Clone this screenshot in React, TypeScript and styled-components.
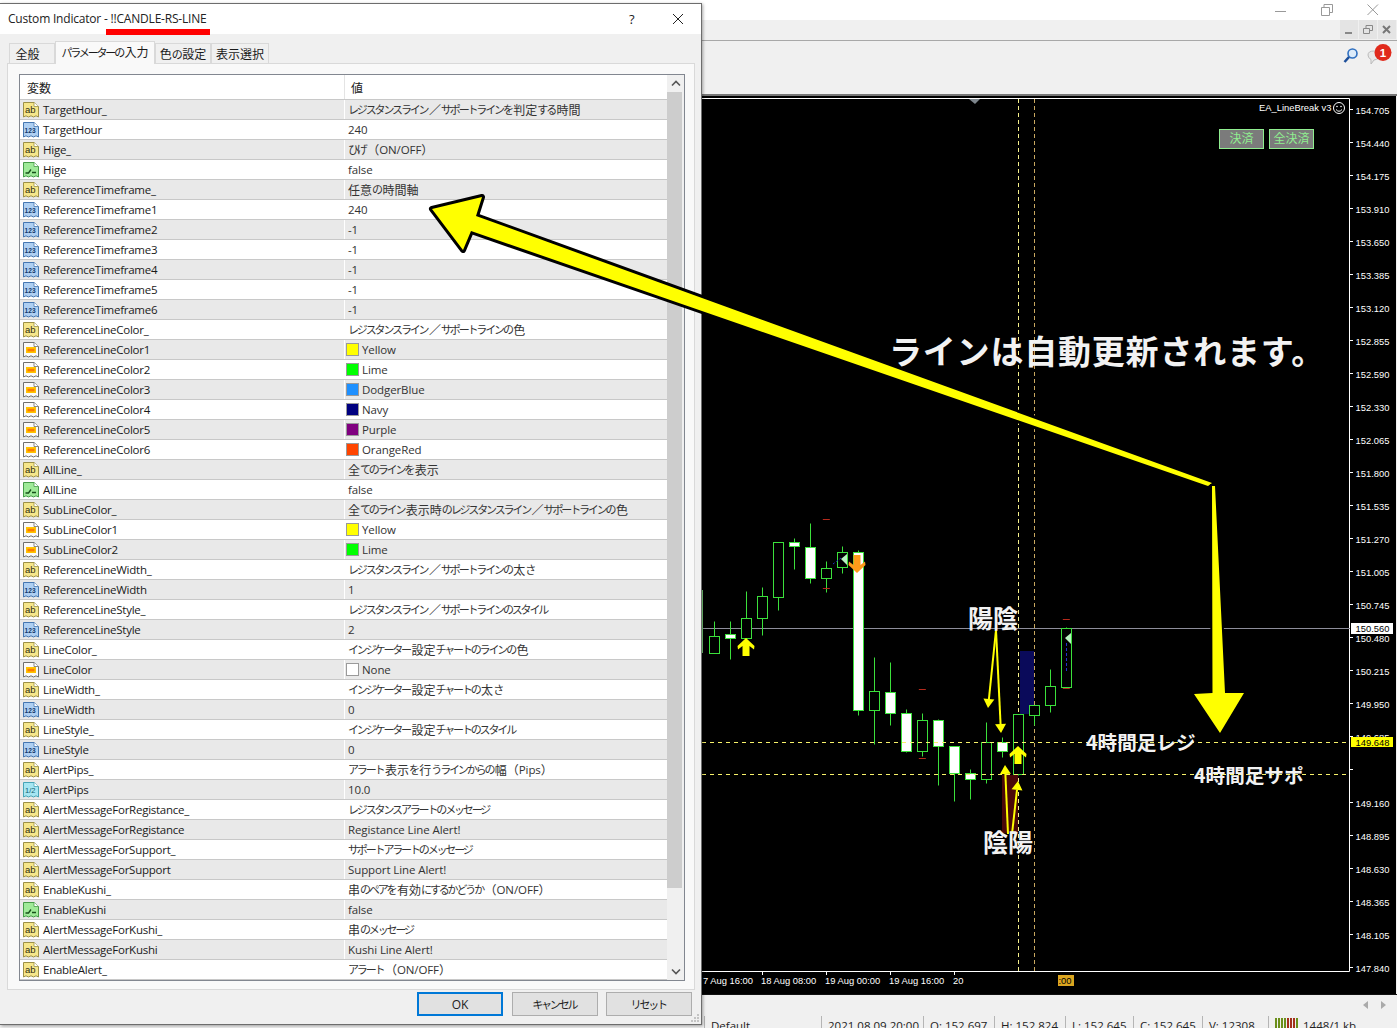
import React from "react";
import styled, { createGlobalStyle } from "styled-components";

const UI = `"Open Sans", "Noto Sans CJK JP", sans-serif`;
const CJK = `"Noto Sans CJK JP", sans-serif`;

const Global = createGlobalStyle`
  html, body { margin: 0; padding: 0; background: #f0f0f0; overflow: hidden; }
  body { font-family: ${UI}; font-size: 11.5px; color: #1a1a1a; }
  * { box-sizing: border-box; }
`;

const Page = styled.div`
  position: relative; width: 1397px; height: 1028px; overflow: hidden;
  display: flex; flex-direction: column; background: #f0f0f0;
`;
const AppTitle = styled.div`
  height: 20px; background: #fff; display: flex; justify-content: flex-end; align-items: center; gap: 34px; padding-right: 18px;
  flex: none;
`;
const MdiBar = styled.div`
  height: 21px; flex: none; background: #f0f0f0; border-bottom: 1px solid #a8a8a8;
  display: flex; justify-content: flex-end; gap: 1px; padding-right: 1px;
`;
const MdiButton = styled.div`
  width: 18px; height: 19px; background: #e4e4e4; display: flex; align-items: center; justify-content: center;
`;
const Toolbar = styled.div`
  height: 55px; flex: none; background: #f0f0f0; border-bottom: 2px solid #777;
  display: flex; justify-content: flex-end; align-items: flex-start; padding: 2px 4px 0 0; gap: 5px;
`;
const ChartArea = styled.div`
  height: 899px; flex: none; background: #f0f0f0; border-bottom: 1px solid #111;
  svg { display: block; }
`;
const ScrollRow = styled.div`
  height: 19px; flex: none; background: #f0f0f0; display: flex; justify-content: flex-end; align-items: center; gap: 12px; padding-right: 10px;
`;
const StatusBar = styled.div`
  height: 14px; flex: none; background: #f0f0f0; display: flex; padding-left: 704px; font-size: 11.5px; color: #222; line-height: 20px; padding-top: 2px;
`;
const StatusCell = styled.div<{ $w: number }>`
  width: ${p => p.$w}px; border-left: 1px solid #b5b5b5; padding-left: 6px; white-space: nowrap; display: flex; gap: 4px;
`;

const Dialog = styled.div`
  position: absolute; left: 0; top: 3px; width: 702px; height: 1022px; background: #f0f0f0;
  border: 1px solid #6d6d6d; border-left: none; box-shadow: 1px 1px 3px rgba(0,0,0,.35);
  display: flex; flex-direction: column;
`;
const DialogTitle = styled.div`
  position: relative; height: 30px; flex: none; background: #fff; display: flex; align-items: center; padding: 0 0 2px 8px; font-size: 12px; letter-spacing: -0.2px; white-space: nowrap; color: #222;
`;
const RedMark = styled.div`
  position: absolute; left: 106px; top: 25px; width: 104px; height: 6px; background: #ff0000;
`;
const HelpMark = styled.span`
  position: absolute; left: 629px; top: 6px; font-size: 13px;
`;
const CloseMark = styled.span`
  position: absolute; left: 672px; top: 9px; display: flex;
`;
const TabRow = styled.div`
  height: 30px; flex: none; padding: 8px 0 0 9px; display: flex; align-items: flex-end; position: relative; z-index: 1; margin-bottom: -1px;
`;
const Tab = styled.div<{ $active?: boolean; $w: number; $inset?: number }>`
  width: ${p => p.$w}px; height: ${p => (p.$active ? 23 : 21)}px;
  background: ${p => (p.$active ? "#f9f9f9" : "#f0f0f0")};
  border: 1px solid #d9d9d9; border-bottom: ${p => (p.$active ? "none" : "1px solid #d9d9d9")};
  display: flex; align-items: center; justify-content: center; font-size: 12px; white-space: nowrap;
  padding-bottom: ${p => (p.$active ? 3 : 0)}px; padding-right: ${p => p.$inset ?? 0}px;
`;
const Panel = styled.div`
  height: 927px; flex: none; margin: 0 6px 0 7px; background: #f9f9f9; border: 1px solid #d9d9d9; padding: 10px 9px 8px 11px;
`;
const Frame = styled.div`
  height: 907px; border: 1px solid #828790; background: #fff; display: flex; overflow: hidden;
`;
const Table = styled.div`
  flex: 1; min-width: 0; display: flex; flex-direction: column;
`;
const Head = styled.div`
  height: 25px; flex: none; display: grid; grid-template-columns: 324px 1fr; border-bottom: 1px solid #c8c8c8; align-items: stretch;
`;
const HeadCell = styled.div<{ $second?: boolean }>`
  padding-left: ${p => (p.$second ? 6 : 7)}px; display: flex; align-items: center; font-size: 12px;
  border-left: ${p => (p.$second ? "1px solid #e4e4e4" : "none")};
`;
const Row = styled.div<{ $alt: boolean }>`
  height: 20px; flex: none; display: grid; grid-template-columns: 324px 1fr; background: ${p => (p.$alt ? "#e9e9e9" : "#fff")};
  border-bottom: 1px solid #c8c8c8;
`;
const NameCell = styled.div`
  display: flex; align-items: center; gap: 4px; padding-left: 3px; white-space: nowrap; line-height: 19px; letter-spacing: -0.25px;
`;
const ValueCell = styled.div`
  display: flex; align-items: center; padding-left: 3px; border-left: 1px solid #fff; white-space: nowrap; line-height: 19px; color: #333; letter-spacing: -0.1px;
`;
const Swatch = styled.span<{ $color: string }>`
  width: 13px; height: 13px; margin: 0 3px 0 -2px; background: ${p => p.$color}; border: 1px solid #9a9a9a; flex: none;
`;
const Kana = styled.span`
  font-family: ${CJK}; font-size: 11px; letter-spacing: -2.15px; margin-right: 1.5px;
`;
const Kanji = styled.span`
  font-family: ${CJK}; font-size: 12px; letter-spacing: 0;
`;
const Scrollbar = styled.div`
  width: 17px; flex: none; background: #f0f0f0; display: flex; flex-direction: column; align-items: center;
`;
const ScrollEnd = styled.div`
  height: 17px; flex: none; display: flex; align-items: center; justify-content: center; width: 100%;
`;
const ScrollTrack = styled.div`
  flex: 1; width: 100%; padding-right: 2px;
`;
const Thumb = styled.div`
  height: 796px; background: #cdcdcd;
`;
const Footer = styled.div`
  flex: 1; display: flex; justify-content: flex-end; align-items: flex-start; padding: 2px 9px 0 0; gap: 8px; position: relative;
`;
const Btn = styled.div<{ $primary?: boolean }>`
  width: 86px; height: 24px; background: #e1e1e1; display: flex; align-items: center; justify-content: center; font-size: 12px;
  border: ${p => (p.$primary ? "2px solid #0078d7" : "1px solid #adadad")}; margin-right: ${p => (p.$primary ? 1 : 0)}px; color: #222;
`;
const Grip = styled.svg`
  position: absolute; right: 1px; bottom: 1px;
`;
const Overlay = styled.svg`
  position: absolute; left: 0; top: 0; pointer-events: none;
`;

const Jp = ({ text }: { text: string }) => (
  <>
    {text.split(/([\u3040-\u30ff]+|[\u3400-\u9fff\uff00-\uffef]+)/).map((part, i) =>
      /^[\u3040-\u30ff]/.test(part) ? <Kana key={i}>{part}</Kana> :
      /^[\u3400-\u9fff\uff00-\uffef]/.test(part) ? <Kanji key={i}>{part}</Kanji> : part
    )}
  </>
);

type Kind = "ab" | "int" | "bool" | "color" | "dbl";
const DOC = "M.5 .5H11L15.5 4.5V15L13 13.8 10.5 15 8 13.8 5.5 15 3 13.8 .5 15Z";
const TypeIcon = ({ kind }: { kind: Kind }) => {
  const c = {
    ab: ["#f6e68a", "#9c9048"], int: ["#aecff2", "#4677b0"], bool: ["#9fea98", "#479a48"],
    color: ["#fafafa", "#707070"], dbl: ["#a6e6f2", "#48a4b6"],
  }[kind];
  return (
    <svg width="16" height="16" viewBox="0 0 16 16" style={{ flex: "none" }}>
      <path d={DOC} fill={c[0]} stroke={c[1]} />
      <path d="M11 .5V4.5H15.5" fill="#fff" stroke={c[1]} strokeWidth=".8" />
      {kind === "ab" && <text x="2" y="11.4" fontSize="9.5" fontFamily="Liberation Sans" fill="#2f2c10" letterSpacing="0">ab</text>}
      {kind === "int" && <text x="1.6" y="11" fontSize="6.6" fontWeight="700" fontFamily="Liberation Sans" fill="#133a6c" letterSpacing="0">123</text>}
      {kind === "dbl" && <text x="2" y="11" fontSize="7.5" fontFamily="Liberation Sans" fill="#14606f" letterSpacing="0">1/2</text>}
      {kind === "bool" && <path d="M2.5 11H5.5L8 7.5M9 10.5H13" fill="none" stroke="#174f1a" strokeWidth="1.3" />}
      {kind === "color" && <>
        <rect x="3" y="5" width="10" height="6" fill="#ffc400" />
        <rect x="4.5" y="6.8" width="7" height="2.6" fill="#ff7a00" />
      </>}
    </svg>
  );
};

const R1 = "レジスタンスライン／サポートライン";
type RowData = { k: Kind; n: string; v: string; c?: string };
const rows: RowData[] = [
  { k: "ab", n: "TargetHour_", v: R1 + "を判定する時間" },
  { k: "int", n: "TargetHour", v: "240" },
  { k: "ab", n: "Hige_", v: "ひげ（ON/OFF）" },
  { k: "bool", n: "Hige", v: "false" },
  { k: "ab", n: "ReferenceTimeframe_", v: "任意の時間軸" },
  { k: "int", n: "ReferenceTimeframe1", v: "240" },
  { k: "int", n: "ReferenceTimeframe2", v: "-1" },
  { k: "int", n: "ReferenceTimeframe3", v: "-1" },
  { k: "int", n: "ReferenceTimeframe4", v: "-1" },
  { k: "int", n: "ReferenceTimeframe5", v: "-1" },
  { k: "int", n: "ReferenceTimeframe6", v: "-1" },
  { k: "ab", n: "ReferenceLineColor_", v: R1 + "の色" },
  { k: "color", n: "ReferenceLineColor1", v: "Yellow", c: "#ffff00" },
  { k: "color", n: "ReferenceLineColor2", v: "Lime", c: "#00ff00" },
  { k: "color", n: "ReferenceLineColor3", v: "DodgerBlue", c: "#1e90ff" },
  { k: "color", n: "ReferenceLineColor4", v: "Navy", c: "#000080" },
  { k: "color", n: "ReferenceLineColor5", v: "Purple", c: "#800080" },
  { k: "color", n: "ReferenceLineColor6", v: "OrangeRed", c: "#ff4500" },
  { k: "ab", n: "AllLine_", v: "全てのラインを表示" },
  { k: "bool", n: "AllLine", v: "false" },
  { k: "ab", n: "SubLineColor_", v: "全てのライン表示時の" + R1 + "の色" },
  { k: "color", n: "SubLineColor1", v: "Yellow", c: "#ffff00" },
  { k: "color", n: "SubLineColor2", v: "Lime", c: "#00ff00" },
  { k: "ab", n: "ReferenceLineWidth_", v: R1 + "の太さ" },
  { k: "int", n: "ReferenceLineWidth", v: "1" },
  { k: "ab", n: "ReferenceLineStyle_", v: R1 + "のスタイル" },
  { k: "int", n: "ReferenceLineStyle", v: "2" },
  { k: "ab", n: "LineColor_", v: "インジケーター設定チャートのラインの色" },
  { k: "color", n: "LineColor", v: "None", c: "#ffffff" },
  { k: "ab", n: "LineWidth_", v: "インジケーター設定チャートの太さ" },
  { k: "int", n: "LineWidth", v: "0" },
  { k: "ab", n: "LineStyle_", v: "インジケーター設定チャートのスタイル" },
  { k: "int", n: "LineStyle", v: "0" },
  { k: "ab", n: "AlertPips_", v: "アラート表示を行うラインからの幅（Pips）" },
  { k: "dbl", n: "AlertPips", v: "10.0" },
  { k: "ab", n: "AlertMessageForRegistance_", v: "レジスタンスアラートのメッセージ" },
  { k: "ab", n: "AlertMessageForRegistance", v: "Registance Line Alert!" },
  { k: "ab", n: "AlertMessageForSupport_", v: "サポートアラートのメッセージ" },
  { k: "ab", n: "AlertMessageForSupport", v: "Support Line Alert!" },
  { k: "ab", n: "EnableKushi_", v: "串のペアを有効にするかどうか（ON/OFF）" },
  { k: "bool", n: "EnableKushi", v: "false" },
  { k: "ab", n: "AlertMessageForKushi_", v: "串のメッセージ" },
  { k: "ab", n: "AlertMessageForKushi", v: "Kushi Line Alert!" },
  { k: "ab", n: "EnableAlert_", v: "アラート（ON/OFF）" },
];

const prices: [string, number][] = [
  ["154.705", 110], ["154.440", 143], ["154.175", 176], ["153.910", 209], ["153.650", 242], ["153.385", 275],
  ["153.120", 308], ["152.855", 341], ["152.590", 374], ["152.330", 407], ["152.065", 440], ["151.800", 473],
  ["151.535", 506], ["151.270", 539], ["151.005", 572], ["150.745", 605], ["150.480", 638], ["150.215", 671],
  ["149.950", 704], ["149.685", 737], ["149.425", 770], ["149.160", 803], ["148.895", 836], ["148.630", 869],
  ["148.365", 902], ["148.105", 935], ["147.840", 968],
];
// wick top, wick bottom, body top, body bottom, filled — in 3x crop units
const candles: [number, number, number, number, boolean][] = [
  [363, 460, 409, 458, false], [363, 478, 403, 415, true], [273, 415, 355, 415, false], [262, 404, 289, 355, false],
  [125, 330, 127, 290, false], [115, 206, 127, 139, true], [70, 250, 142, 235, true], [183, 275, 205, 235, false],
  [139, 218, 157, 202, false], [150, 646, 157, 631, true], [472, 733, 574, 631, false], [487, 674, 577, 640, true],
  [628, 757, 640, 754, true], [640, 768, 661, 754, false], [658, 856, 661, 739, true], [739, 902, 739, 820, true],
  [808, 896, 820, 838, true], [667, 848, 727, 838, false], [712, 770, 727, 754, true], [643, 825, 643, 823, false],
  [616, 676, 616, 644, false], [508, 635, 559, 616, false], [380, 565, 385, 560, false],
];
const Y = (z: number) => Math.round(500 + z / 3) + 0.5;
const redTicks: [number, number][] = [[379, 58], [379, 265], [667, 567], [667, 775], [1099, 357], [1099, 565]];
const AX = { fontFamily: "Liberation Sans", fontSize: 9.4, fill: "#fff" };
const GREEN = "#3be03b";

const thickArrow = (x: number, y: number, d: 1 | -1, color: string) => (
  <polygon fill={color} points={`${x},${y} ${x + 8.5},${y + 8 * d} ${x + 8},${y + 11.5 * d} ${x + 3.5},${y + 8 * d} ${x + 3.5},${y + 18 * d} ${x - 3.5},${y + 18 * d} ${x - 3.5},${y + 8 * d} ${x - 8},${y + 11.5 * d} ${x - 8.5},${y + 8 * d}`} />
);
const thinArrow = (x1: number, y1: number, x2: number, y2: number) => {
  const a = Math.atan2(y2 - y1, x2 - x1);
  const L = 9, W = 5.5;
  const bx = x2 - L * Math.cos(a), by = y2 - L * Math.sin(a);
  const nx = -Math.sin(a), ny = Math.cos(a);
  return (
    <g>
      <line x1={x1} y1={y1} x2={bx} y2={by} stroke="#ffff00" strokeWidth="2" />
      <polygon fill="#ffff00" points={`${x2},${y2} ${bx + nx * W},${by + ny * W} ${bx - nx * W},${by - ny * W}`} />
    </g>
  );
};
const Bold = { fontFamily: CJK, fontWeight: 700, fill: "#f2f2f2" } as const;

const Chart = () => (
  <svg width="1397" height="898" viewBox="0 96 1397 898">
    <rect x="0" y="96" width="1396" height="898" fill="#000" />
    <path d="M701 98.5H1349.5V971.5H701" fill="none" stroke="#fff" />
    <polygon points="969,99 980,99 975,104" fill="#7d858c" />
    <rect x="1020" y="651" width="14" height="63" fill="#0a0a5a" />
    <rect x="1002" y="775" width="16" height="58" fill="#4a0808" />
    <line x1="1018.5" y1="99" x2="1018.5" y2="971" stroke="#f5f08c" strokeDasharray="4 3" />
    <line x1="1034.5" y1="99" x2="1034.5" y2="971" stroke="#c9a860" strokeDasharray="4 3" />
    <line x1="702" y1="628.5" x2="1350" y2="628.5" stroke="#8d8d9a" />
    <rect x="701" y="590" width="2" height="63" fill="#7cd07c" />
    {candles.map(([wt, wb, bt, bb, filled], i) => {
      const x = 714.5 + 16 * i;
      return (
        <g key={i}>
          <line x1={x} y1={Y(wt)} x2={x} y2={Y(wb)} stroke={GREEN} />
          <rect x={x - 5} y={Y(bt)} width="10" height={Y(bb) - Y(bt)} fill={filled ? "#fff" : "#000"} stroke={GREEN} />
        </g>
      );
    })}
    {redTicks.map(([zx, zy], i) => (
      <line key={i} x1={700 + zx / 3 - 3.5} y1={Y(zy)} x2={700 + zx / 3 + 3.5} y2={Y(zy)} stroke="#b52a1c" />
    ))}
    <line x1="833" y1="564" x2="841" y2="558" stroke="#2233cc" strokeDasharray="2 2" />
    <line x1="1066.5" y1="643" x2="1066.5" y2="672" stroke="#2233cc" strokeDasharray="3 2" />
    <polygon points="841,559 847,554 847,565" fill="#b8f0c0" />
    <polygon points="1065,638 1071,633 1071,644" fill="#b8f0c0" />
    <line x1="702" y1="742.5" x2="1350" y2="742.5" stroke="#f7f26a" strokeDasharray="4 4" />
    <line x1="702" y1="774.5" x2="1350" y2="774.5" stroke="#f7f26a" strokeDasharray="4 4" />
    {thickArrow(746, 638, 1, "#ffff00")}
    {thickArrow(1018, 746, 1, "#ffff00")}
    {thickArrow(857, 573, -1, "#ff9a1a")}
    {thinArrow(996, 630, 988, 708)}
    {thinArrow(996, 630, 1001, 733)}
    {thinArrow(1008, 834, 1005, 765)}
    {thinArrow(1012, 834, 1018, 781)}
    <text x="968" y="628" fontSize="25" {...Bold}>陽陰</text>
    <text x="983" y="852" fontSize="25" {...Bold}>陰陽</text>
    <text x="1086" y="750" fontSize="19.6" {...Bold}>4時間足レジ</text>
    <text x="1194" y="783" fontSize="19.6" {...Bold}>4時間足サポ</text>
    <text x="889" y="364" fontSize="33" letterSpacing=".8" {...Bold}>ラインは自動更新されます。</text>

    <text x="1259" y="111" fontSize="9.4" fontFamily="Liberation Sans" fill="#fff">EA_LineBreak v3</text>
    <g fill="none" stroke="#fff" strokeWidth="1">
      <circle cx="1339" cy="108" r="5.5" />
      <path d="M1336 109.5Q1339 113 1342 109.5" />
    </g>
    <circle cx="1337" cy="106.5" r=".8" fill="#fff" />
    <circle cx="1341" cy="106.5" r=".8" fill="#fff" />
    <rect x="1219.5" y="129.5" width="44" height="19" fill="#7b7b7b" stroke="#90ee90" />
    <rect x="1269.5" y="129.5" width="44" height="19" fill="#7b7b7b" stroke="#90ee90" />
    <text x="1241.5" y="143" textAnchor="middle" fontSize="12" fontFamily={CJK} fill="#90ee90">決済</text>
    <text x="1291.5" y="143" textAnchor="middle" fontSize="12" fontFamily={CJK} fill="#90ee90">全決済</text>

    {prices.map(([t, y]) => (
      <g key={t}>
        <line x1="1350" y1={y - 0.5} x2="1353" y2={y - 0.5} stroke="#fff" />
        <text x="1355.5" y={y + 3.5} {...AX}>{t}</text>
      </g>
    ))}
    <rect x="1354" y="768" width="42" height="14" fill="#000" />
    <rect x="1351" y="623" width="42" height="11" fill="#fff" />
    <text x="1355.5" y="632" {...AX} fill="#000">150.560</text>
    <rect x="1351" y="737" width="42" height="10" fill="#ffff00" />
    <text x="1355.5" y="746" {...AX} fill="#000">149.648</text>

    {[762, 826, 890, 954].map(x => <line key={x} x1={x + 0.5} y1="971" x2={x + 0.5} y2="975" stroke="#fff" />)}
    <text x="703" y="983.5" {...AX}>7 Aug 16:00</text>
    <text x="761" y="983.5" {...AX}>18 Aug 08:00</text>
    <text x="825" y="983.5" {...AX}>19 Aug 00:00</text>
    <text x="889" y="983.5" {...AX}>19 Aug 16:00</text>
    <text x="953" y="983.5" {...AX}>20</text>
    <rect x="1058" y="975" width="16" height="11" fill="#daa520" />
    <text x="1058.5" y="983.5" {...AX} fill="#000">:00</text>
  </svg>
);

const App = () => (
  <>
    <Global />
    <Page>
      <AppTitle>
        <svg width="12" height="12"><line x1="0" y1="7.5" x2="11" y2="7.5" stroke="#999" /></svg>
        <svg width="12" height="12"><path d="M.5 3.5H8.5V11.5H.5ZM3 3.5V.5H11.5V8.5H8.5" fill="none" stroke="#999" /></svg>
        <svg width="12" height="12"><path d="M.5 .5L11 11M11 .5L.5 11" stroke="#999" fill="none" /></svg>
      </AppTitle>
      <MdiBar>
        <MdiButton><svg width="10" height="10"><rect x="1" y="7" width="7" height="2" fill="#888" /></svg></MdiButton>
        <MdiButton><svg width="10" height="10"><path d="M.5 3.5H6.5V8.5H.5ZM3 3V.5H9.5V5.5H7" fill="none" stroke="#888" /></svg></MdiButton>
        <MdiButton><svg width="10" height="10"><path d="M1 1L8 8M8 1L1 8" stroke="#777" strokeWidth="2" /></svg></MdiButton>
      </MdiBar>
      <Toolbar>
        <svg width="18" height="18" viewBox="0 0 18 18" style={{ marginTop: 4 }}>
          <circle cx="10.5" cy="6.5" r="4.5" fill="#dcebfa" stroke="#2f6fc0" strokeWidth="1.6" />
          <line x1="7" y1="10" x2="2.5" y2="15" stroke="#1d4f9a" strokeWidth="2.6" />
        </svg>
        <svg width="28" height="24" viewBox="0 0 28 24">
          <path d="M3 12Q3 8 9 8T15 12 9 17L6 21V16.5Q3 15 3 12Z" fill="#e8e8e8" stroke="#bbb" />
          <circle cx="18" cy="9.5" r="8.5" fill="#e02a1c" />
          <text x="18" y="13.5" textAnchor="middle" fontSize="11.5" fontWeight="700" fontFamily="Liberation Sans" fill="#fff">1</text>
        </svg>
      </Toolbar>
      <ChartArea><Chart /></ChartArea>
      <ScrollRow>
        <svg width="6" height="8"><polygon points="5,0 5,8 0,4" fill="#aaa" /></svg>
        <svg width="6" height="8"><polygon points="0,0 0,8 5,4" fill="#aaa" /></svg>
      </ScrollRow>
      <StatusBar>
        <StatusCell $w={117}>Default</StatusCell>
        <StatusCell $w={102}>2021.08.09 20:00</StatusCell>
        <StatusCell $w={71}>O: 152.697</StatusCell>
        <StatusCell $w={71}>H: 152.824</StatusCell>
        <StatusCell $w={68}>L: 152.645</StatusCell>
        <StatusCell $w={69}>C: 152.645</StatusCell>
        <StatusCell $w={66}>V: 12308</StatusCell>
        <StatusCell $w={120}>
          <svg width="24" height="14" style={{ marginTop: 2, flex: "none" }}>
            {[0, 3, 6, 9, 12, 15, 18, 21].map((x, i) => (
              <rect key={x} x={x} y="0" width="2" height="12" fill={i > 3 && i < 7 ? "#a3301c" : "#6b8f1a"} />
            ))}
          </svg>
          1448/1 kb
        </StatusCell>
      </StatusBar>

      <Dialog>
        <DialogTitle>
          Custom Indicator - !!CANDLE-RS-LINE
          <RedMark />
          <HelpMark>?</HelpMark>
          <CloseMark>
            <svg width="12" height="12"><path d="M1 1L11 11M11 1L1 11" stroke="#222" fill="none" /></svg>
          </CloseMark>
        </DialogTitle>
        <TabRow>
          <Tab $w={46} $inset={9}><Jp text="全般" /></Tab>
          <Tab $w={100} $active><Jp text="パラメーターの入力" /></Tab>
          <Tab $w={56}><Jp text="色の設定" /></Tab>
          <Tab $w={58}><Jp text="表示選択" /></Tab>
        </TabRow>
        <Panel>
          <Frame>
            <Table>
              <Head>
                <HeadCell><Jp text="変数" /></HeadCell>
                <HeadCell $second><Jp text="値" /></HeadCell>
              </Head>
              {rows.map((r, i) => (
                <Row key={r.n} $alt={i % 2 === 0}>
                  <NameCell><TypeIcon kind={r.k} />{r.n}</NameCell>
                  <ValueCell>
                    {r.c && <Swatch $color={r.c} />}
                    <Jp text={r.v} />
                  </ValueCell>
                </Row>
              ))}
            </Table>
            <Scrollbar>
              <ScrollEnd>
                <svg width="10" height="7"><path d="M1 5.5L5 1.5 9 5.5" fill="none" stroke="#555" strokeWidth="1.6" /></svg>
              </ScrollEnd>
              <ScrollTrack><Thumb /></ScrollTrack>
              <ScrollEnd>
                <svg width="10" height="7"><path d="M1 1.5L5 5.5 9 1.5" fill="none" stroke="#555" strokeWidth="1.6" /></svg>
              </ScrollEnd>
            </Scrollbar>
          </Frame>
        </Panel>
        <Footer>
          <Btn $primary>OK</Btn>
          <Btn><Jp text="キャンセル" /></Btn>
          <Btn><Jp text="リセット" /></Btn>
          <Grip width="10" height="10">
            {[[7, 1], [4, 4], [7, 4], [1, 7], [4, 7], [7, 7]].map(([x, y]) => (
              <rect key={`${x}-${y}`} x={x} y={y} width="2" height="2" fill="#c4c4c4" />
            ))}
          </Grip>
        </Footer>
      </Dialog>

      <Overlay width="1397" height="1028" viewBox="0 0 1397 1028">
        <polygon
          points="432,209 482,197 476,216 1212,483 1208,486 471,231 463,250"
          fill="#ffff00" stroke="#000" strokeWidth="6" strokeLinejoin="round" paintOrder="stroke"
        />
        <polygon
          points="1212,486 1215,486 1225,693 1244,693 1220,733 1194,694 1212.5,693"
          fill="#ffff00" stroke="#000" strokeWidth="4" paintOrder="stroke"
        />
      </Overlay>
    </Page>
  </>
);

export default App;
